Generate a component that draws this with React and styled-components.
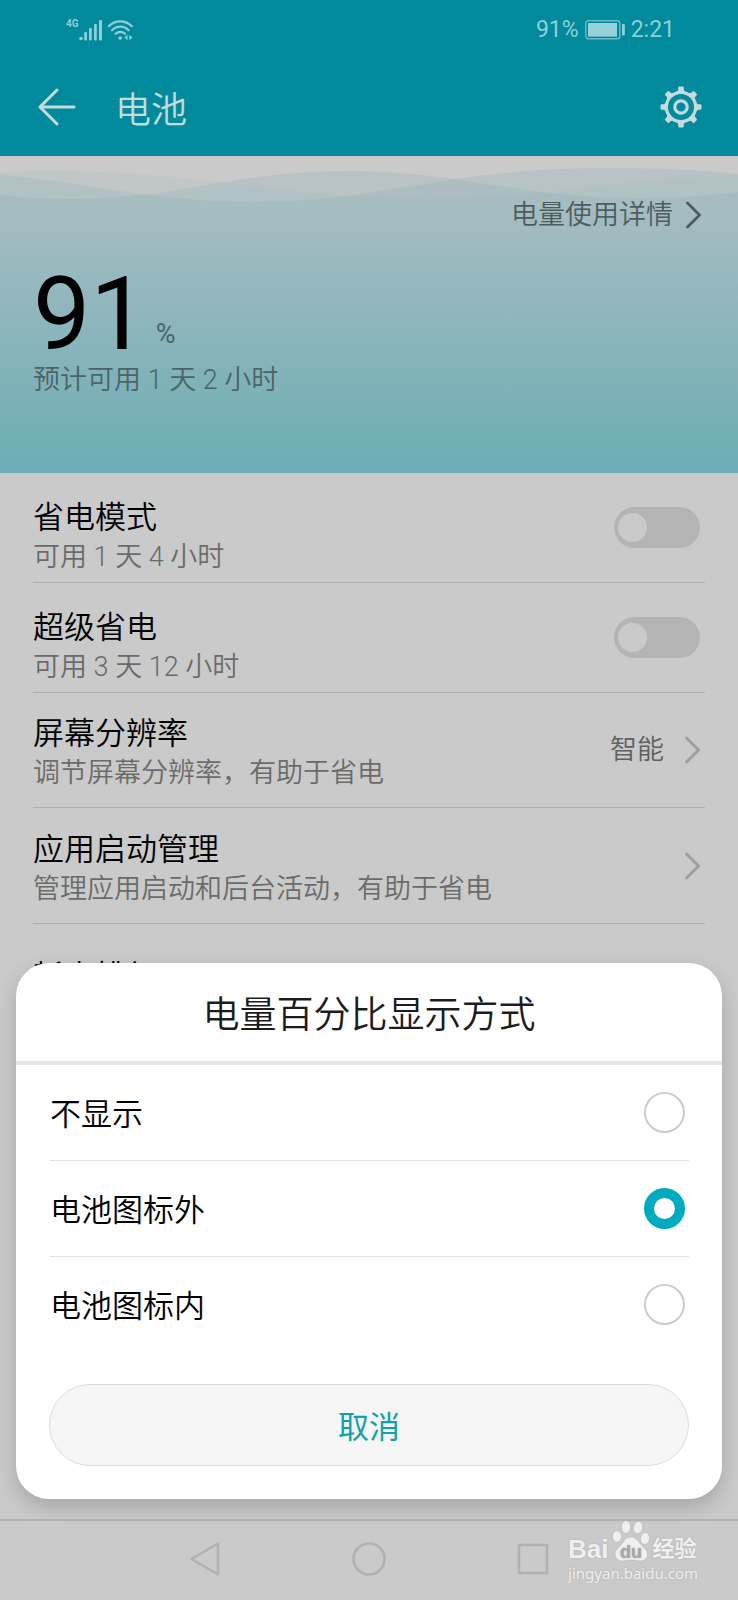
import React from 'react'
import styled, {createGlobalStyle} from 'styled-components'


const GlobalStyle = createGlobalStyle`
  * {
    box-sizing: border-box;
  }
  body {
    margin: 0;
    background: #cacaca;
    font-family: Roboto, "Noto Sans CJK SC", sans-serif;
  }
  button, input {
    margin: 0;
    font-family: inherit;
  }
`

const Screen = styled.div`
  position: relative;
  display: flex;
  flex-direction: column;
  min-height: 100vh;
  overflow: hidden;
`

const Header = styled.header`
  background: #008a9b;
  color: #c5dadd;
`

const StatusBar = styled.div`
  display: flex;
  align-items: center;
  justify-content: space-between;
  height: 58px;
  padding: 2px 63px 0 66px;
  color: #8fd0d8;
  font-size: 23px;
  line-height: 28px;
`

const StatusGroup = styled.div`
  display: flex;
  align-items: center;
  gap: ${props => props.$gap}px;
`

const Network = styled.span`
  align-self: flex-start;
  font-size: 10px;
  line-height: 10px;
  font-weight: 700;
`

const TitleBar = styled.div`
  display: flex;
  align-items: center;
  height: 98px;
  padding: 0 36px;
`

const Title = styled.h1`
  flex: 1;
  margin: 0;
  padding: 8px 0 0 38px;
  font-size: 36px;
  line-height: 40px;
  font-weight: 350;
`

const IconButton = styled.button`
  display: flex;
  padding: 0;
  border: 0;
  background: none;
  color: inherit;
`

const Hero = styled.section`
  position: relative;
  height: 317px;
  padding: 40px 37px 0 33px;
  background: linear-gradient(#cacaca 46px, #a7bdc2 46px, #6cacb4);
  color: #4b6468;
`

const WaveLayer = styled.svg`
  position: absolute;
  top: 0;
  left: 0;
  width: 100%;
  height: 46px;
`

const DetailLink = styled.a`
  position: relative;
  display: flex;
  align-items: center;
  justify-content: flex-end;
  gap: 12px;
  color: #4d5c60;
  font-size: 27px;
  line-height: 38px;
  font-weight: 350;
  text-decoration: none;
`

const Level = styled.div`
  display: flex;
  align-items: flex-end;
  gap: 8px;
  padding-top: 34px;
`

const LevelNumber = styled.span`
  color: #000;
  font-size: 102px;
  line-height: 92px;
`

const LevelUnit = styled.span`
  font-size: 27px;
  line-height: 52px;
`

const Remaining = styled.p`
  margin: 0;
  font-size: 27px;
  line-height: 40px;
  font-weight: 350;
`

const List = styled.main`
  flex: 1;
  padding: 0 33px;
`

const Row = styled.div`
  display: flex;
  align-items: center;
  padding-right: 5px;
  border-bottom: 1px solid #b1b1b1;
`

const RowText = styled.label`
  flex: 1;
  padding: ${props => props.$pad};
`

const RowTitle = styled.div`
  color: #000;
  font-size: 31px;
  line-height: 40px;
  font-weight: 350;
`

const RowHint = styled.div`
  color: #6b6b6b;
  font-size: 27px;
  line-height: 38px;
  font-weight: 350;
`

const RowValue = styled.span`
  margin-right: 20px;
  color: #606060;
  font-size: 27px;
  line-height: 38px;
  font-weight: 350;
`

const Switch = styled.input`
  appearance: none;
  display: flex;
  align-items: center;
  width: 86px;
  height: 41px;
  padding: 0 4px;
  border-radius: 21px;
  background: #b4b4b4;
  &::before {
    content: '';
    width: 29px;
    height: 29px;
    border-radius: 50%;
    background: #cacaca;
  }
  &:checked {
    justify-content: flex-end;
    background: #008a9b;
  }
`

const Sheet = styled.section`
  position: absolute;
  left: 16px;
  right: 16px;
  bottom: 101px;
  padding-bottom: 33px;
  border-radius: 33px;
  background: #fff;
  box-shadow: 0 8px 20px rgba(0, 0, 0, 0.18);
`

const SheetTitle = styled.h2`
  margin: 0;
  padding: 28px 0 20px;
  border-bottom: 4px solid #e6e6e6;
  color: #1c1c1c;
  font-size: 37px;
  line-height: 50px;
  font-weight: 350;
  text-align: center;
`

const Options = styled.div`
  margin: 0 33px 31px;
`

const Option = styled.label`
  display: flex;
  align-items: center;
  justify-content: space-between;
  height: 96px;
  padding: 0 4px 0 1px;
  border-bottom: 1px solid #e3e3e3;
  color: #000;
  font-size: 31px;
  font-weight: 350;
  &:last-child {
    border-color: transparent;
  }
`

const OptionName = styled.span`
  padding-bottom: 2px;
`

const Radio = styled.input`
  appearance: none;
  width: 41px;
  height: 41px;
  border: 2px solid #ccc;
  border-radius: 50%;
  background: #fff;
  &:checked {
    border: 10px solid #00abc0;
  }
`

const CancelButton = styled.button`
  display: block;
  width: calc(100% - 66px);
  height: 82px;
  margin: 0 33px;
  padding: 0 0 2px;
  border: 1px solid #dcdcdc;
  border-radius: 41px;
  background: #f6f6f6;
  color: #12a0ae;
  font-size: 31px;
`

const NavBar = styled.nav`
  display: flex;
  align-items: center;
  justify-content: center;
  gap: 128px;
  height: 81px;
  padding-bottom: 3px;
  border-top: 2px solid #b4b4b4;
  color: #b1b1b1;
`

const Watermark = styled.div`
  position: absolute;
  right: 40px;
  bottom: 17px;
  color: #f0f0f0;
  text-shadow: 0 0 2px #a8a8a8;
`

const Brand = styled.div`
  display: flex;
  align-items: flex-end;
  gap: 3px;
  height: 44px;
`

const BrandWord = styled.span`
  font-family: "Liberation Sans", "Noto Sans CJK SC", sans-serif;
  font-size: ${props => props.$size}px;
  line-height: 28px;
  font-weight: 700;
`

const BrandUrl = styled.div`
  font-family: "Noto Sans", sans-serif;
  font-size: 15px;
  line-height: 20px;
`

const Chevron = ({color}) => (
  <svg width="16" height="28" viewBox="0 0 16 28" fill="none" stroke={color} strokeWidth="2.8" strokeLinecap="round" strokeLinejoin="round">
    <path d="M2.500 2l12 12-12 12"/>
  </svg>
)

const SignalIcon = () => (
  <svg width="24" height="22" viewBox="0 0 24 22" fill="currentColor">
    <circle cx="2" cy="19.5" r="1.8"/>
    <rect x="5.2" y="13" width="2.8" height="8.4" rx="1"/>
    <rect x="10" y="9" width="2.8" height="12.4" rx="1"/>
    <rect x="15" y="5" width="2.8" height="16.4" rx="1"/>
    <rect x="20" y="1" width="3" height="20.4" rx="1"/>
  </svg>
)

const WifiIcon = () => (
  <svg width="27" height="22" viewBox="0 0 27 22" fill="none" stroke="currentColor" strokeWidth="2.2" strokeLinecap="round">
    <path d="M1.8 7.2C8 .7 18.5.7 24.8 7.2M5 11.2c4.6-4.8 12-4.8 16.6 0M8.6 14.8c2.7-2.7 6.7-2.7 9.4 0"/>
    <circle cx="13.2" cy="19" r="1.8" fill="currentColor" stroke="none"/>
    <path d="M20.5 15.8v5.4l-3.2-2.7zM22.3 15.8v5.4l3.2-2.7z" fill="currentColor" stroke="none"/>
  </svg>
)

const BatteryIcon = () => (
  <svg width="40" height="20" viewBox="0 0 40 20" fill="none">
    <rect x="0.8" y="0.8" width="34" height="18" rx="2.5" stroke="#6bbcc7" strokeWidth="1.4"/>
    <rect x="3" y="3" width="29" height="13.6" fill="#97d1da"/>
    <rect x="37" y="4" width="2.8" height="11.6" rx="1" fill="#8fd0d8"/>
  </svg>
)

const BackIcon = () => (
  <svg width="41" height="40" viewBox="0 0 41 40" fill="none" stroke="currentColor" strokeWidth="3" strokeLinecap="round" strokeLinejoin="round">
    <path d="M21 3L4 20l17 17M4 20h34"/>
  </svg>
)

const GearIcon = () => (
  <svg width="42" height="42" viewBox="-21 -21 42 42" fill="currentColor">
    {[0, 45, 90, 135, 180, 225, 270, 315].map(angle => (
      <path key={angle} d="M-5-14.500L-2.800-17v-2.200q0-1.300 1.400-1.300h2.800q1.400 0 1.400 1.300v2.200L5-14.500z" transform={`rotate(${angle})`}/>
    ))}
    <circle r="14.6" fill="#008a9b" stroke="currentColor" strokeWidth="3.2"/>
    <circle r="6.2" fill="none" stroke="currentColor" strokeWidth="3.2"/>
  </svg>
)

const Waves = () => (
  <WaveLayer viewBox="0 0 738 46" preserveAspectRatio="none" fill="#78acb6">
    <path opacity="0.1" d="M0 16C25 15 45 14 70 15C210 17 290 43 424 43C550 43 600 24 738 19V46H0z"/>
    <path opacity="0.2" d="M0 19C70 23 150 46 250 46C390 46 440 12 612 12C660 12 700 14 738 18V46H0z"/>
    <path opacity="0.2" d="M0 39C25 42 45 43 70 43C180 43 235 15 348 15C460 15 520 42 635 42C670 42 705 41 738 36V46H0z"/>
  </WaveLayer>
)

const Paw = () => (
  <svg width="38" height="44" viewBox="0 0 38 44" fill="#f0f0f0" stroke="#b4b4b4" strokeWidth="0.6">
    <ellipse cx="5" cy="17.500" rx="4.600" ry="5.800"/>
    <ellipse cx="14" cy="8" rx="4.600" ry="6.300"/>
    <ellipse cx="26" cy="8.500" rx="4.600" ry="6.300" transform="rotate(8 26 8.5)"/>
    <ellipse cx="33" cy="19.500" rx="4.600" ry="6" transform="rotate(8 33 19.5)"/>
    <path d="M19 18c5 0 7 4 10 7.500s6.500 5.500 6.500 10-4 6.700-8 6.500c-3-.2-5.500-1-8.500-1s-5 1-8 1c-4.500 0-8-2.500-8-7s4-6 6.500-9.500S14 18 19 18z"/>
    <text x="19" y="38.500" textAnchor="middle" fill="#a6a6a6" stroke="none" fontFamily="Liberation Sans, sans-serif" fontSize="18" fontWeight="700">du</text>
  </svg>
)

const options = ['不显示', '电池图标外', '电池图标内']

class App extends React.Component {
  constructor(props) {
    super(props)
    this.state = {selected: 1, saving: false, superSaving: false}
  }
  render() {
    return <Screen>
      <GlobalStyle/>
      <Header>
        <StatusBar>
          <StatusGroup $gap={4}>
            <StatusGroup $gap={0}>
              <Network>4G</Network>
              <SignalIcon/>
            </StatusGroup>
            <WifiIcon/>
          </StatusGroup>
          <StatusGroup $gap={6}>
            <span>91%</span>
            <BatteryIcon/>
            <span>2:21</span>
          </StatusGroup>
        </StatusBar>
        <TitleBar>
          <IconButton aria-label="返回"><BackIcon/></IconButton>
          <Title>电池</Title>
          <IconButton aria-label="设置"><GearIcon/></IconButton>
        </TitleBar>
      </Header>
      <Hero>
        <Waves/>
        <DetailLink href="#detail">
          电量使用详情
          <Chevron color="#4d5c60"/>
        </DetailLink>
        <Level>
          <LevelNumber>91</LevelNumber>
          <LevelUnit>%</LevelUnit>
        </Level>
        <Remaining>预计可用 1 天 2 小时</Remaining>
      </Hero>
      <List>
        <Row>
          <RowText htmlFor="saving" $pad="25px 0 6px">
            <RowTitle>省电模式</RowTitle>
            <RowHint>可用 1 天 4 小时</RowHint>
          </RowText>
          <Switch id="saving" type="checkbox" checked={this.state.saving} onChange={() => this.toggle('saving')}/>
        </Row>
        <Row>
          <RowText htmlFor="super" $pad="25px 0 6px">
            <RowTitle>超级省电</RowTitle>
            <RowHint>可用 3 天 12 小时</RowHint>
          </RowText>
          <Switch id="super" type="checkbox" checked={this.state.superSaving} onChange={() => this.toggle('superSaving')}/>
        </Row>
        <Row>
          <RowText as="div" $pad="21px 0 15px">
            <RowTitle>屏幕分辨率</RowTitle>
            <RowHint>调节屏幕分辨率，有助于省电</RowHint>
          </RowText>
          <RowValue>智能</RowValue>
          <Chevron color="#9c9c9c"/>
        </Row>
        <Row>
          <RowText as="div" $pad="22px 0 15px">
            <RowTitle>应用启动管理</RowTitle>
            <RowHint>管理应用启动和后台活动，有助于省电</RowHint>
          </RowText>
          <Chevron color="#9c9c9c"/>
        </Row>
        <Row>
          <RowText as="div" $pad="33px 0">
            <RowTitle>耗电排行</RowTitle>
          </RowText>
          <Chevron color="#9c9c9c"/>
        </Row>
      </List>
      <NavBar>
        <IconButton aria-label="后退">
          <svg width="36" height="36" viewBox="0 0 36 36" fill="none" stroke="currentColor" strokeWidth="2.6" strokeLinejoin="round">
            <path d="M31 2.500v31L4.500 18z"/>
          </svg>
        </IconButton>
        <IconButton aria-label="主屏幕">
          <svg width="36" height="36" viewBox="0 0 36 36" fill="none" stroke="currentColor" strokeWidth="2.6">
            <circle cx="18" cy="18" r="15.500"/>
          </svg>
        </IconButton>
        <IconButton aria-label="最近任务">
          <svg width="36" height="36" viewBox="0 0 36 36" fill="none" stroke="currentColor" strokeWidth="2.6" strokeLinejoin="round">
            <rect x="4" y="4" width="28" height="28"/>
          </svg>
        </IconButton>
      </NavBar>
      <Watermark>
        <Brand>
          <BrandWord $size={26}>Bai</BrandWord>
          <Paw/>
          <BrandWord $size={22}>经验</BrandWord>
        </Brand>
        <BrandUrl>jingyan.baidu.com</BrandUrl>
      </Watermark>
      <Sheet role="dialog" aria-labelledby="sheet-title">
        <SheetTitle id="sheet-title">电量百分比显示方式</SheetTitle>
        <Options>
          {options.map((name, index) => (
            <Option key={name}>
              <OptionName>{name}</OptionName>
              <Radio type="radio" name="display" checked={this.state.selected === index} onChange={() => this.select(index)}/>
            </Option>
          ))}
        </Options>
        <CancelButton>取消</CancelButton>
      </Sheet>
    </Screen>
  }
  toggle(key) {
    this.setState(state => ({[key]: !state[key]}))
  }
  select(index) {
    this.setState({selected: index})
  }
}

export default App
